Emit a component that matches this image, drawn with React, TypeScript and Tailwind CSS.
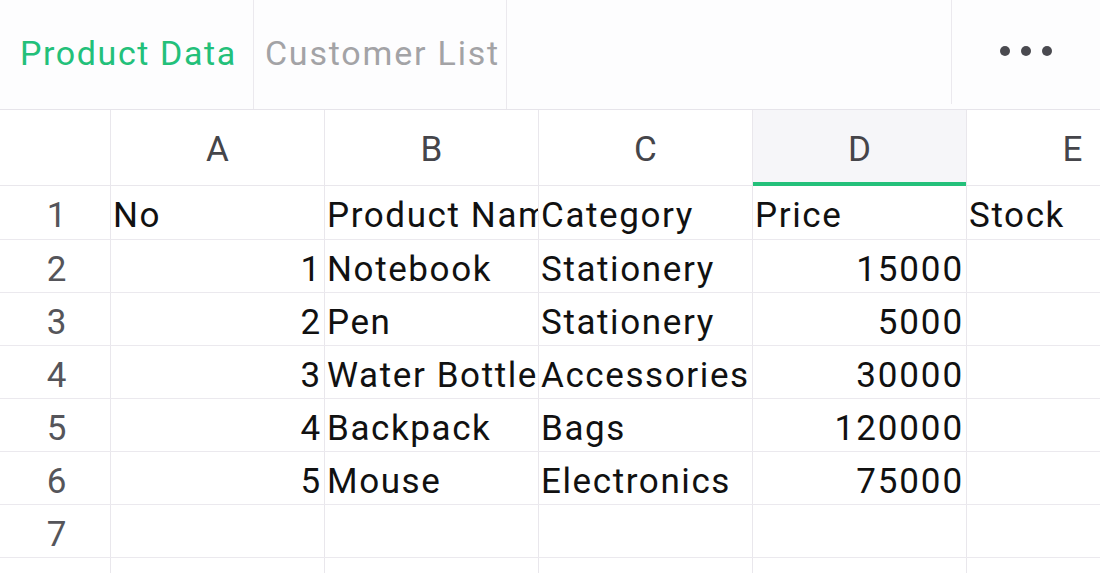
import React from "react";

const cols = ["A", "B", "C", "D", "E"];

type Cell = { v: string; right?: boolean };
const rows: Cell[][] = [
  [{ v: "No" }, { v: "Product Name" }, { v: "Category" }, { v: "Price" }, { v: "Stock" }],
  [{ v: "1", right: true }, { v: "Notebook" }, { v: "Stationery" }, { v: "15000", right: true }, { v: "" }],
  [{ v: "2", right: true }, { v: "Pen" }, { v: "Stationery" }, { v: "5000", right: true }, { v: "" }],
  [{ v: "3", right: true }, { v: "Water Bottle" }, { v: "Accessories" }, { v: "30000", right: true }, { v: "" }],
  [{ v: "4", right: true }, { v: "Backpack" }, { v: "Bags" }, { v: "120000", right: true }, { v: "" }],
  [{ v: "5", right: true }, { v: "Mouse" }, { v: "Electronics" }, { v: "75000", right: true }, { v: "" }],
  [{ v: "" }, { v: "" }, { v: "" }, { v: "" }, { v: "" }],
  [{ v: "" }, { v: "" }, { v: "" }, { v: "" }, { v: "" }],
];

export default function App() {
  return (
    <div
      className="w-[1100px] h-[573px] overflow-hidden bg-white"
      style={{ fontFamily: "Roboto, 'Noto Sans', sans-serif" }}
    >
      {/* Tab bar */}
      <div className="flex h-[110px] border-b border-[#e6e4ea] bg-[#fdfdfe]">
        <div className="flex items-center pl-[20px] pr-[16px] border-r border-[#ebe9ee] pb-[2px]">
          <span className="text-[34px] text-[#23c07a] tracking-[1.6px]">Product Data</span>
        </div>
        <div className="flex items-center pl-[11px] pr-[6px] border-r border-[#ebe9ee] pb-[2px]">
          <span className="text-[34px] text-[#a3a3a6] tracking-[1.8px]">Customer List</span>
        </div>
        <div className="flex-1" />
        <div className="w-[149px] mb-[5px] border-l border-[#ebe9ee] flex items-center justify-center gap-[11px] pb-[2px]">
          <span className="w-[10px] h-[10px] rounded-full bg-[#4a4a50]" />
          <span className="w-[10px] h-[10px] rounded-full bg-[#4a4a50]" />
          <span className="w-[10px] h-[10px] rounded-full bg-[#4a4a50]" />
        </div>
      </div>

      {/* Column header */}
      <div className="flex h-[76px] border-b border-[#e9e7ec]">
        <div className="w-[111px] shrink-0 border-r border-[#e9e7ec]" />
        {cols.map((c, i) => (
          <div
            key={c}
            className={
              i === 3
                ? "relative w-[214px] shrink-0 border-r border-[#e9e7ec] bg-[#f6f6f9] flex items-center justify-center text-[35px] text-[#45454a] pt-[5px]"
                : i === 4
                ? "flex-1 flex items-center justify-center text-[35px] text-[#45454a] pt-[5px] pl-[78px]"
                : "w-[214px] shrink-0 border-r border-[#e9e7ec] flex items-center justify-center text-[35px] text-[#45454a] pt-[5px]"
            }
          >
            {c}
            {i === 3 && <span className="absolute left-0 right-0 bottom-[-1px] h-[4px] bg-[#24c07a]" />}
          </div>
        ))}
      </div>

      {/* Rows */}
      {rows.map((r, ri) => (
        <div
          key={ri}
          className={(ri === 0 ? "h-[54px] " : "h-[53px] ") + "flex border-b border-[#ebe9ee]"}
        >
          <div className="w-[111px] shrink-0 border-r border-[#e9e7ec] flex items-center justify-center text-[35px] text-[#55555a] pt-[8px] pl-[4px] tracking-[1px]">
            {ri + 1}
          </div>
          {r.map((cell, ci) => (
            <div
              key={ci}
              className={
                (ci === 4 ? "flex-1 " : "w-[214px] shrink-0 border-r border-[#e9e7ec] ") +
                "overflow-hidden whitespace-nowrap flex items-center text-[35px] text-[#111] pt-[8px] tracking-[1.6px] " +
                (cell.right ? "justify-end pr-[2px] tracking-[1.9px]" : "pl-[2px]")
              }
            >
              {cell.v}
            </div>
          ))}
        </div>
      ))}
    </div>
  );
}
